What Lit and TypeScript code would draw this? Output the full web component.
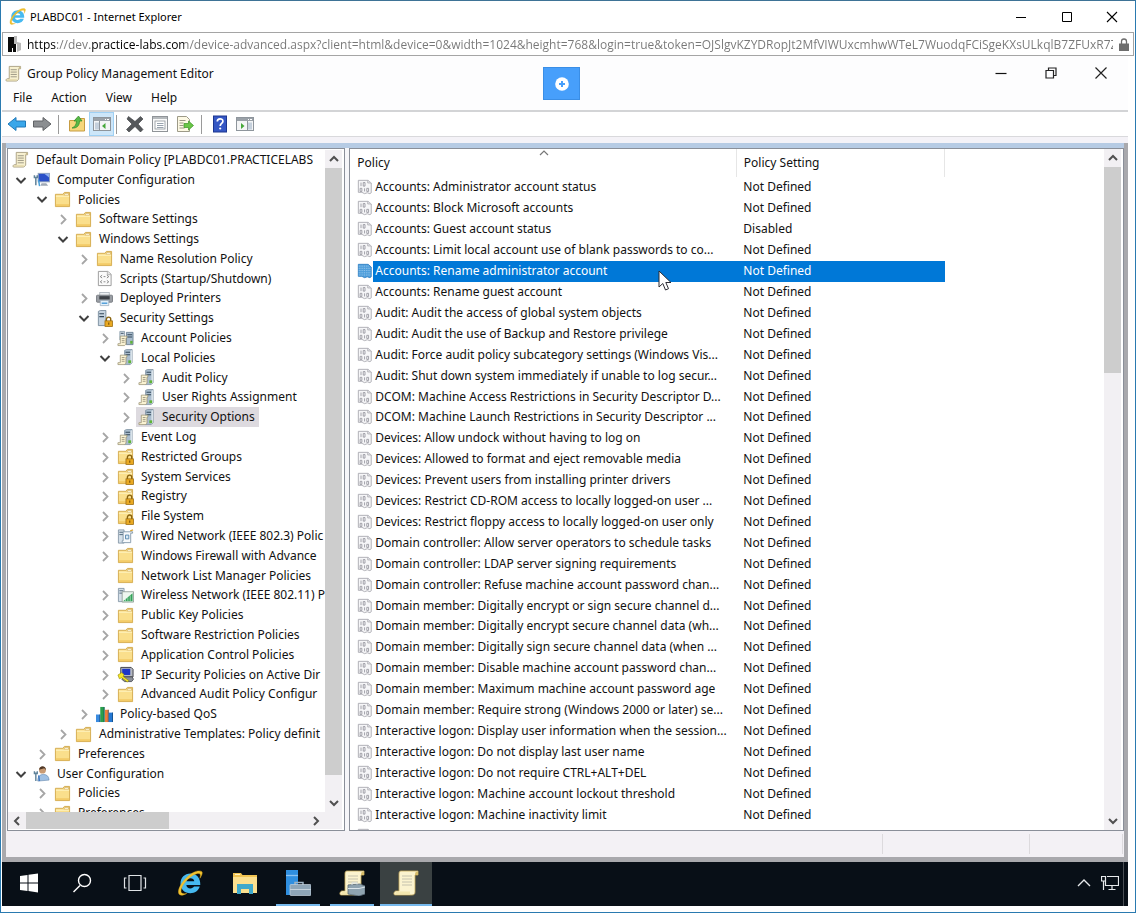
import { LitElement, html, svg, css, nothing } from "lit";
import { customElement, property } from "lit/decorators.js";

const frame = (body: unknown, box = "0 0 18 18") =>
  html`<svg class="ico" viewBox=${box} aria-hidden="true">${body}</svg>`;

const folderShape = svg`
  <path d="M1.500 3.500h8l1.500-2h5.500v15h-15z" fill="#fadf8c" stroke="#d3aa4e"/>
  <path d="M10.500 4.500l1-2h4v2z" fill="#fffbe6" stroke="#c89b3d" stroke-width=".6"/>
  <path d="M2 5.500h14" stroke="#fff4c8"/>
  <path d="M2 14h14v2H2z" fill="#f3cb68"/>`;
const lockShape = svg`
  <path d="M11 12v-2.200a2.300 2.300 0 0 1 4.600 0V12" fill="none" stroke="#8a6410" stroke-width="1.500"/>
  <rect x="9.500" y="11.500" width="8" height="6" fill="#e9a922" stroke="#9a6b10" stroke-width=".8"/>
  <path d="M13.500 13.300v2.200" stroke="#7a5208" stroke-width="1.200"/>`;
const scrollShape = svg`
  <path d="M4.500 1.500h12v2.500h-2v11l-2 2h-11c-1-1 0-2.500 1-2.500h2z" fill="#f7f0cf" stroke="#a3987a" stroke-width=".9"/>
  <path d="M14.500 4h2V2l-1.500-.5z" fill="#cbbd8e"/>
  <path d="M6 5h6.500M6 7.500h6.500M6 10h6.500M6 12.500h6.500" stroke="#8f8a7b" stroke-width=".9"/>
  <path d="M3 15h9.500v1.500h-11z" fill="#e3d7a8"/>`;
const towerShape = svg`
  <path d="M8 1.500l2-1h6v14l-2 2H8z" fill="#a9bccd" stroke="#718697" stroke-width=".7"/>
  <path d="M9 3.500h5M9 6h5" stroke="#33475a" stroke-width="1.100"/>
  <path d="M14.300 2v14l1.500-2V1z" fill="#dfe8ee"/>
  <rect x="12" y="12" width="3" height="3" fill="#5fb336"/>`;
const noteShape = svg`
  <path d="M3.500 6.500h7v2h-1v6.500l-1.500 1.500H1v-2h2.500z" fill="#faf3d3" stroke="#9b9272" stroke-width=".8"/>
  <path d="M5 9h3M5 11h3M5 13h3" stroke="#8a846f" stroke-width=".8"/>`;

const glyphs: Record<string, unknown> = {
  scroll: frame(scrollShape),
  folder: frame(folderShape),
  folderLock: frame(svg`${folderShape}${lockShape}`),
  policy: frame(svg`${towerShape}${noteShape}`),
  account: frame(svg`
    <path d="M3 1.500h5v9H3z" fill="#cfdbe4" stroke="#718697" stroke-width=".7"/>
    <path d="M4 3.500h3" stroke="#33475a"/>
    <path d="M10 2.500h7v13h-7z" fill="#a9bccd" stroke="#5d7486" stroke-width=".8"/>
    <path d="M11 5h5M11 7.500h5" stroke="#33475a" stroke-width="1.100"/>
    <rect x="14" y="11.500" width="2.500" height="3" fill="#5fb336"/>${noteShape}`),
  computer: frame(svg`
    <rect x="5.500" y="2.500" width="12" height="9" fill="#2a50c8" stroke="#93a4bb"/>
    <path d="M12 3h5v4z" fill="#8fb0f0"/>
    <path d="M9 13h5l2 2.500H8z" fill="#9fa9b5"/>
    <path d="M3 6v9M1.500 4.500v2.500h3V4.500" stroke="#5f8299" stroke-width="1.600" fill="none"/>
    <path d="M5.800 9l1.200 7" stroke="#49a0d8" stroke-width="1.600"/>`),
  user: frame(svg`
    <path d="M5 17c0-5 2.500-7 6-7s6 2 6 6z" fill="#9fc0e4" stroke="#5b7fa8" stroke-width=".6"/>
    <circle cx="10" cy="5.500" r="3.600" fill="#c99b74"/>
    <path d="M6.500 5c0-5 7.500-5 7.200.5L12 3.500z" fill="#4f3826"/>
    <path d="M3 8v9M1.500 6.500v2.500h3V6.500" stroke="#5f8299" stroke-width="1.500" fill="none"/>
    <path d="M6 11l.8 6" stroke="#3f78c0" stroke-width="1.500"/>`),
  script: frame(svg`
    <path d="M2.500 1.500h10l3.500 3v12h-13.500z" fill="#fbfbfb" stroke="#9a9a9a"/>
    <path d="M12 1.500v3.500h4" fill="#e6e6e6" stroke="#9a9a9a" stroke-width=".7"/>
    <path d="M6.500 5.500l-2 1.500 2 1.500M8 7h2M11.500 5.500l2 1.500-2 1.500M6.500 11l-2 1.500 2 1.500M8 12.500h2M11.500 11l2 1.500-2 1.500" fill="none" stroke="#777" stroke-width=".9"/>`),
  printer: frame(svg`
    <rect x="4" y="2.500" width="10" height="4" fill="#eef1f4" stroke="#9aa3ab" stroke-width=".7"/>
    <rect x="0.500" y="5.500" width="17" height="7.500" rx="1" fill="#9a9ea4" stroke="#686c72" stroke-width=".8"/>
    <rect x="3.500" y="6.500" width="11" height="3.500" fill="#3d4147"/>
    <path d="M4.500 11h9v5.500h-9z" fill="#e3f0fa" stroke="#8fa3b5" stroke-width=".7"/>
    <path d="M6 14h6" stroke="#4c9bd8" stroke-width="1.500"/>`),
  secure: frame(svg`
    <path d="M2.500 1.500l2-1h6v15l-2 1h-6z" fill="#c6d4e0" stroke="#667c8e" stroke-width=".8"/>
    <path d="M3.500 4h5M3.500 7h5" stroke="#33475a" stroke-width="1.200"/>${lockShape}`),
  wired: frame(svg`
    <path d="M1.500 2h6v14h-6z" fill="#d5e0e9" stroke="#768a9b" stroke-width=".8"/>
    <path d="M2.500 4.500h4M2.500 7h4" stroke="#4f6577"/>
    <path d="M6.500 4h10v1.500h-2v10h-9v-2h1z" fill="#f7f9fb" stroke="#7d93a6" stroke-width=".9"/>
    <path d="M9 7.500h3.500v4H9z" fill="#dbeaf5" stroke="#5a88ae"/>
    <path d="M14 3l3-1" stroke="#d9a63a" stroke-width="1.400"/>`),
  wireless: frame(svg`
    <path d="M1.500 1.500h6v14h-6z" fill="#d5e0e9" stroke="#768a9b" stroke-width=".8"/>
    <path d="M2.500 4h4M2.500 6.500h4" stroke="#4f6577"/>
    <path d="M5.500 5h12v11h-12z" fill="#eef7f0" stroke="#86948c" stroke-width=".8"/>
    <path d="M6.500 15l10-8.500v8.500z" fill="#33a159"/>
    <path d="M9 15v-3M11.500 15v-4M14 15V9" stroke="#c9ecd4" stroke-width=".7"/>`),
  ipsec: frame(svg`
    <path d="M4 1.500h11l2 2v8H4z" fill="#b5b9c0" stroke="#3d3f45"/>
    <rect x="5.500" y="3" width="8.500" height="6.500" fill="#1c36c6"/>
    <path d="M5 14l3-2.500h8l1.500 2.500-2 2.500H8z" fill="#8a8f98" stroke="#3d3f45" stroke-width=".8"/>
    <path d="M1 9.500l4-2.500 2.500 2-1 2 6 4.500-1.500 1.500-6-4.500-2.500 1z" fill="#f4e628" stroke="#8d8206" stroke-width=".6"/>`),
  qos: frame(svg`
    <path d="M0 9h4.500v8H0z" fill="#3a8be0"/><path d="M4.500 1h4.500v16H4.500z" fill="#2aa04a"/>
    <path d="M9.500 4h4v13h-4z" fill="#ef7f3a"/><path d="M13.500 7h4.500v10h-4.500z" fill="#2478d4"/>
    <path d="M3.500 9h1v8h-1zM8 1h1.200v16H8zM12.500 4h1v13h-1zM17 7h1v10h-1z" fill="#0b3a66" opacity=".6"/>`),
  item: frame(svg`
    <path d="M1.500 1.500h11l3.500 3v11l-1.500 1-3-1-3 1-3-1.500H1.500z" fill="#f6f6f8" stroke="#a9a9b0"/>
    <path d="M12 1.500v3h4" fill="#dedee2" stroke="#a9a9b0" stroke-width=".8"/>
    <path d="M4.500 4v4M9 4v4h-2V4zM5.500 10.500v3.500h-2v-3.500zM8.500 10.500V14M13 10.500v3.500h-2v-3.500z" fill="none" stroke="#8f8f98" stroke-width=".9"/>`),
  itemOn: frame(svg`
    <path d="M1.500 1.500h11l3.500 3v11l-1.500 1-3-1-3 1-3-1.500H1.500z" fill="#4f9fdc" stroke="#2f7fc4"/>
    <path d="M2 3.500h12M2 6h14M2 8.500h14M2 11h14M2 13.500h14" stroke="#a4cdee" stroke-width="1" stroke-dasharray="1 1"/>`),
};

const chevDown = html`<svg class="chev" viewBox="0 0 16 16" aria-hidden="true"><path d="M3.500 6l4.500 4.500L12.500 6" fill="none" stroke="#404040" stroke-width="2"/></svg>`;
const chevRight = html`<svg class="chev" viewBox="0 0 16 16" aria-hidden="true"><path d="M6 4l4.500 4.500L6 13" fill="none" stroke="#a6a6a6" stroke-width="1.800"/></svg>`;

const arrow = (d: string) =>
  html`<svg class="arr" viewBox="0 0 16 16" aria-hidden="true"><path d=${d} fill="none" stroke="#505050" stroke-width="2"/></svg>`;
const up = "M4 10l4-4 4 4";
const down = "M4 6l4 4 4-4";
const left = "M10 4L6 8l4 4";
const right = "M6 4l4 4-4 4";

const ieGlyph = html`<svg class="ie" viewBox="0 0 24 24" aria-hidden="true">
  <path d="M21.500 13.800H8.600c.2 2 1.700 3.200 3.800 3.200 1.500 0 2.600-.6 3.300-1.700h5.300c-1.200 3.900-4.500 6.200-8.700 6.200-5.400 0-9.100-3.800-9.100-9 0-5.200 3.800-9.200 9.200-9.200 5.500 0 9.400 4 9.100 10.500zM8.700 10.400h7.300c-.3-1.900-1.600-2.900-3.600-2.900s-3.400 1-3.700 2.900z" fill="#46b9f0"/>
  <path d="M22.700 1.300c-3.200-1.600-9.200.8-14.200 6C3.500 12.300.4 18.500 1.600 21.800c1 2.300 4.600 1.500 7.400-.2-2.700.6-4.700.3-5.200-1C3.100 17.600 5.500 13 9.800 8.800 14.200 4.500 19.200 2.300 21 3.500c.9.700.8 2.200.1 4.200 1.900-2.700 2.900-5.500 1.600-6.400z" fill="#f2c230" stroke="#e0ae1c" stroke-width=".4"/>
</svg>`;

interface Node { t: string; l: number; i: string; o?: boolean | null; on?: boolean }
const n = (l: number, i: string, t: string, o: boolean | null = false, on = false): Node => ({ l, i, t, o, on });
const nodes: Node[] = [
  n(0, "scroll", "Default Domain Policy [PLABDC01.PRACTICELABS", null),
  n(1, "computer", "Computer Configuration", true),
  n(2, "folder", "Policies", true),
  n(3, "folder", "Software Settings"),
  n(3, "folder", "Windows Settings", true),
  n(4, "folder", "Name Resolution Policy"),
  n(4, "script", "Scripts (Startup/Shutdown)", null),
  n(4, "printer", "Deployed Printers"),
  n(4, "secure", "Security Settings", true),
  n(5, "account", "Account Policies"),
  n(5, "policy", "Local Policies", true),
  n(6, "policy", "Audit Policy"),
  n(6, "policy", "User Rights Assignment"),
  n(6, "policy", "Security Options", false, true),
  n(5, "policy", "Event Log"),
  n(5, "folderLock", "Restricted Groups"),
  n(5, "folderLock", "System Services"),
  n(5, "folderLock", "Registry"),
  n(5, "folderLock", "File System"),
  n(5, "wired", "Wired Network (IEEE 802.3) Polic"),
  n(5, "folder", "Windows Firewall with Advance"),
  n(5, "folder", "Network List Manager Policies", null),
  n(5, "wireless", "Wireless Network (IEEE 802.11) P"),
  n(5, "folder", "Public Key Policies"),
  n(5, "folder", "Software Restriction Policies"),
  n(5, "folder", "Application Control Policies"),
  n(5, "ipsec", "IP Security Policies on Active Dir"),
  n(5, "folder", "Advanced Audit Policy Configur"),
  n(4, "qos", "Policy-based QoS"),
  n(3, "folder", "Administrative Templates: Policy definit"),
  n(2, "folder", "Preferences"),
  n(1, "user", "User Configuration", true),
  n(2, "folder", "Policies"),
  n(2, "folder", "Preferences"),
];

const policies = [
  "Accounts: Administrator account status",
  "Accounts: Block Microsoft accounts",
  "Accounts: Guest account status",
  "Accounts: Limit local account use of blank passwords to co...",
  "Accounts: Rename administrator account",
  "Accounts: Rename guest account",
  "Audit: Audit the access of global system objects",
  "Audit: Audit the use of Backup and Restore privilege",
  "Audit: Force audit policy subcategory settings (Windows Vis...",
  "Audit: Shut down system immediately if unable to log secur...",
  "DCOM: Machine Access Restrictions in Security Descriptor D...",
  "DCOM: Machine Launch Restrictions in Security Descriptor ...",
  "Devices: Allow undock without having to log on",
  "Devices: Allowed to format and eject removable media",
  "Devices: Prevent users from installing printer drivers",
  "Devices: Restrict CD-ROM access to locally logged-on user ...",
  "Devices: Restrict floppy access to locally logged-on user only",
  "Domain controller: Allow server operators to schedule tasks",
  "Domain controller: LDAP server signing requirements",
  "Domain controller: Refuse machine account password chan...",
  "Domain member: Digitally encrypt or sign secure channel d...",
  "Domain member: Digitally encrypt secure channel data (wh...",
  "Domain member: Digitally sign secure channel data (when ...",
  "Domain member: Disable machine account password chan...",
  "Domain member: Maximum machine account password age",
  "Domain member: Require strong (Windows 2000 or later) se...",
  "Interactive logon: Display user information when the session...",
  "Interactive logon: Do not display last user name",
  "Interactive logon: Do not require CTRL+ALT+DEL",
  "Interactive logon: Machine account lockout threshold",
  "Interactive logon: Machine inactivity limit",
];

const base = css`
  :host { box-sizing: border-box; font: 12px/16px "Noto Sans", "Open Sans", sans-serif; color: #111; }
  *, *::before { box-sizing: border-box; }
  button { font: inherit; color: inherit; background: none; border: 0; padding: 0; margin: 0; display: flex; align-items: center; justify-content: center; }
  svg { display: block; flex: none; }
`;

@customElement("scroll-bar")
class ScrollBar extends LitElement {
  @property() axis = "v";
  @property({ type: Number }) start = 0;
  @property({ type: Number }) size = 50;
  static styles = [base, css`
    :host { display: flex; flex: none; background: #f2f0f3; }
    :host([axis="v"]) { flex-direction: column; width: 17px; }
    :host([axis="h"]) { height: 17px; }
    button { width: 17px; height: 18px; flex: none; }
    :host([axis="h"]) button { width: 18px; height: 17px; }
    .arr { width: 16px; height: 16px; }
    .track { flex: 1; display: flex; }
    :host([axis="v"]) .track { flex-direction: column; }
    .thumb { background: #cdcdcd; }
  `];
  render() {
    const v = this.axis === "v";
    return html`
      <button aria-label=${v ? "Scroll up" : "Scroll left"}>${arrow(v ? up : left)}</button>
      <div class="track">
        <div style="flex:${this.start}"></div>
        <div class="thumb" style="flex:${this.size}"></div>
        <div style="flex:${100 - this.start - this.size}"></div>
      </div>
      <button aria-label=${v ? "Scroll down" : "Scroll right"}>${arrow(v ? down : right)}</button>`;
  }
}

@customElement("browser-head")
class BrowserHead extends LitElement {
  static styles = [base, css`
    :host { display: block; flex: none; }
    .title { display: flex; align-items: center; height: 31px; padding-left: 7px; color: #000; font-size: 11px; }
    .ie { width: 17px; height: 17px; margin-right: 4px; }
    .grow { flex: 1; }
    .title button { width: 46px; height: 30px; }
    .title button:last-child { width: 44px; }
    .title svg.w { width: 12px; height: 12px; }
    .addr { display: flex; align-items: center; height: 24px; border: 1px solid #a5a5a5; padding: 0 4px 0 5px; }
    .fav { width: 14px; height: 16px; margin-right: 5px; }
    input { flex: 1; min-width: 0; font: 12px/16px "Open Sans", "Noto Sans", sans-serif; border: 0; padding: 0; margin: 0 6px 0 0; outline: 0; height: 20px; color: #777;
      background: linear-gradient(90deg, #000 29px, #777 29px 63px, #000 63px 157px, #777 157px); -webkit-background-clip: text; background-clip: text; -webkit-text-fill-color: transparent; }
    .lock { width: 10px; height: 13px; }
  `];
  render() {
    return html`
      <div class="title">
        ${ieGlyph}<span>PLABDC01 - Internet Explorer</span><span class="grow"></span>
        <button aria-label="Minimize"><svg class="w" viewBox="0 0 12 12"><path d="M1 6.500h10" stroke="#000"/></svg></button>
        <button aria-label="Maximize"><svg class="w" viewBox="0 0 12 12"><path d="M1.500 1.500h9v9h-9z" fill="none" stroke="#000"/></svg></button>
        <button aria-label="Close"><svg class="w" viewBox="0 0 12 12"><path d="M1 1l10 10M11 1L1 11" stroke="#000" stroke-width="1.100"/></svg></button>
      </div>
      <div class="addr">
        <svg class="fav" viewBox="0 0 14 16" aria-hidden="true"><path d="M0 1h6v7h2v8H5v-4H4v4H0z" fill="#0b0b0b"/><path d="M6 0h3v6l4 1v7l-4 2V8H6z" fill="#b9b9b9"/></svg>
        <input aria-label="Address" value="https://dev.practice-labs.com/device-advanced.aspx?client=html&device=0&width=1024&height=768&login=true&token=OJSlgvKZYDRopJt2MfVIWUxcmhwWTeL7WuodqFCiSgeKXsULkqlB7ZFUxR7ZYOgV">
        <svg class="lock" viewBox="0 0 10 13" aria-hidden="true"><path d="M2.500 6V3.500a2.500 2.500 0 0 1 5 0V6" fill="none" stroke="#6d6d6d" stroke-width="1.300"/><path d="M0 5.500h10V13H0z" fill="#6d6d6d"/></svg>
      </div>`;
  }
}

@customElement("policy-tree")
class PolicyTree extends LitElement {
  static styles = [base, css`
    :host { display: flex; flex-direction: column; min-width: 0; min-height: 0; background: #fff; border: 1px solid #8a8f99; padding: 1px 2px 1px 0; }
    .top { flex: 1; display: flex; min-height: 0; }
    .clip { flex: 1; min-width: 0; overflow: hidden; }
    ul { list-style: none; margin: 0; padding: 0; height: calc(100% + 11px); display: flex; flex-direction: column; }
    li { flex: 1 1 0; min-height: 0; display: flex; align-items: center; white-space: nowrap; }
    .chev { width: 16px; height: 16px; margin-right: 2px; }
    .item { display: flex; align-items: center; height: 20px; padding: 0 4px 0 2px; gap: 7px; }
    .on { background: #dddadf; }
    .ico { width: 17px; height: 17px; }
    .foot { display: flex; padding-right: 17px; background: #f2f0f3; }
    .foot scroll-bar { flex: 1; }
  `];
  render() {
    return html`
      <div class="top">
        <div class="clip"><ul role="tree">
          ${nodes.map((d) => html`<li role="treeitem" style="padding-left:${d.o === null ? 2 + 21 * d.l : 4 + 21 * (d.l - 1) + 1}px">
            ${d.o === null ? nothing : d.o ? chevDown : chevRight}
            <div class="item ${d.on ? "on" : ""}">${glyphs[d.i]}<span>${d.t}</span></div>
          </li>`)}
        </ul></div>
        <scroll-bar axis="v" start="0" size="97"></scroll-bar>
      </div>
      <div class="foot"><scroll-bar axis="h" start="0" size="51"></scroll-bar></div>`;
  }
}

@customElement("policy-list")
class PolicyList extends LitElement {
  static styles = [base, css`
    :host { display: flex; min-width: 0; min-height: 0; background: #fff; border: 1px solid #8a8f99; padding-right: 2px; }
    .clip { flex: 1; min-width: 0; overflow: hidden; position: relative; }
    .caret { position: absolute; left: 186px; top: 0; width: 16px; height: 8px; }
    table { border-collapse: collapse; height: calc(100% + 16px); width: 595px; table-layout: fixed; }
    th, td { padding: 0; text-align: left; font-weight: 400; white-space: nowrap; overflow: hidden; }
    th { height: 28px; padding-left: 7px; border-right: 1px solid #e6e6e6; }
    th.first { width: 386px; }
    td + td { padding-left: 7px; }
    .cell { display: flex; align-items: center; padding-left: 7px; gap: 2px; }
    .ico { width: 16px; height: 16px; }
    .sel td { background: #0078d7; color: #fff; }
    .sel td:first-child { background: linear-gradient(90deg, #fff 23px, #0078d7 23px); }
  `];
  render() {
    return html`
      <div class="clip">
        <svg class="caret" viewBox="0 0 16 8" aria-hidden="true"><path d="M4 6l4-4 4 4" fill="none" stroke="#777" stroke-width="1.200"/></svg>
        <table>
          <thead><tr><th class="first">Policy</th><th>Policy Setting</th></tr></thead>
          <tbody>
            ${policies.map((p, i) => html`<tr class=${i === 4 ? "sel" : ""}>
              <td><div class="cell">${glyphs[i === 4 ? "itemOn" : "item"]}<span>${p}</span></div></td>
              <td>${i === 2 ? "Disabled" : "Not Defined"}</td></tr>`)}
            <tr><td><div class="cell">${glyphs.item}</div></td><td></td></tr>
          </tbody>
        </table>
      </div>
      <scroll-bar axis="v" start="0" size="32"></scroll-bar>`;
  }
}

@customElement("task-bar")
class TaskBar extends LitElement {
  static styles = [base, css`
    :host { display: flex; flex: none; height: 44px; background: #080f17; }
    button { width: 54px; height: 44px; border-bottom: 2px solid transparent; }
    button:first-child, button:nth-child(2) { width: 53px; }
    button:nth-child(4) { width: 56px; }
    button:nth-child(5) { width: 53px; }
    .run { width: 44px; margin: 0 5px; border-bottom-color: #76b9ed; }
    .cur { width: 52px; margin: 0 0 0 1px; background: #3a4142; border-bottom-color: #76b9ed; }
    .grow { flex: 1; }
    .s, .ie { width: 26px; height: 26px; }
    .tray { width: 26px; }
    .tray svg { width: 18px; height: 18px; }
    .peek { width: 5px; border-left: 1px solid #4a4f55; }
  `];
  render() {
    const paper = svg`<path d="M8 1h17v4h-3v17c0 2-1 3-3 3H2c-2 0-1-4 1-4h3V4c0-2 .500-3 2-3z" fill="#fbf3cf" stroke="#c9ab5a" stroke-width=".8"/><path d="M22 5h3V2c-2-1-3 0-3 3z" fill="#d8bd6a"/><path d="M9 6h10M9 9h10M9 12h10M9 15h10" stroke="#b9b5a6" stroke-width=".8"/><path d="M3 21.500h14v3H2z" fill="#f3e6ae"/>`;
    return html`
      <button aria-label="Start"><svg class="s" viewBox="0 0 26 26"><path d="M4 6l7.500-1v7.500H4zM12.500 4.800L22 3.600v8.900h-9.500zM4 13.500h7.500V21L4 20zM12.500 13.500H22v8.900l-9.500-1.300z" fill="#fff"/></svg></button>
      <button aria-label="Search"><svg class="s" viewBox="0 0 26 26"><path d="M11 15.500L4.500 22" stroke="#fff" stroke-width="1.500"/><circle cx="15.500" cy="10.500" r="6" fill="none" stroke="#fff" stroke-width="1.400"/></svg></button>
      <button aria-label="Task View"><svg class="s" viewBox="0 0 26 26"><path d="M7 5.500h12v15H7zM4.500 8H2.500v10h2M21.500 8h2v10h-2" fill="none" stroke="#dfe3e6" stroke-width="1.200"/></svg></button>
      <button aria-label="Internet Explorer">${ieGlyph}</button>
      <button aria-label="File Explorer"><svg class="s" viewBox="0 0 26 26"><path d="M1 3h8l1.500 2H25v18H1z" fill="#f0c352"/><path d="M1 7h24v16H1z" fill="#fbe08f"/><path d="M3 4.500h5" stroke="#fff2c0"/><path d="M5 14h16v10h-4v-5H9v5H5z" fill="#3fa9cc"/></svg></button>
      <button class="run" aria-label="Server Manager"><svg class="s" viewBox="0 0 26 26"><path d="M1 0h12v25H1z" fill="#2f8fe0"/><path d="M1 5.500h12" stroke="#8cc4f2" stroke-width="1.300"/><path d="M10 15V12.500h8V15" fill="none" stroke="#9fb3c4" stroke-width="1.500"/><rect x="5" y="14.500" width="21" height="11" rx="1" fill="#8fa6b8" stroke="#c6d3dd" stroke-width=".7"/><path d="M5 19.500h21" stroke="#c6d3dd"/></svg></button>
      <button class="run" aria-label="Group Policy Management"><svg class="s" viewBox="0 0 26 26">${paper}<path d="M9 15l12-1 5 2v8l-6 2-11-2z" fill="#8fa3b0" stroke="#5b6b77" stroke-width=".8"/><path d="M9 18.500h11l6-1.500M13 15v-2h5v1.500" stroke="#dbe4ea" fill="none"/></svg></button>
      <button class="cur" aria-label="Group Policy Management Editor"><svg class="s" viewBox="0 0 26 26">${paper}</svg></button>
      <span class="grow"></span>
      <button class="tray" aria-label="Show hidden icons"><svg viewBox="0 0 18 18"><path d="M3 12l6-6 6 6" fill="none" stroke="#e6e9eb" stroke-width="1.400"/></svg></button>
      <button class="tray" aria-label="Network"><svg viewBox="0 0 18 18"><path d="M6 2.500h11.500v9H4.500V7M11 11.500V15M7.500 15.500h7M.500 2.500h4V7h-4zM2.500 7v9" fill="none" stroke="#e6e9eb" stroke-width="1.200"/></svg></button>
      <span class="peek"></span>`;
  }
}

const win = svg`<rect x=".500" y="2.500" width="17" height="13" fill="#f4f5f6" stroke="#8e959c"/><path d="M1 3h16v3H1z" fill="#9aa1a8"/><path d="M12 4.500h1M14 4.500h2" stroke="#fff"/>`;

@customElement("app-root")
class AppRoot extends LitElement {
  static styles = [base, css`
    :host { display: flex; flex-direction: column; height: 100vh; background: #fff; border: 1px solid #2a7ab0; border-top-color: #3e7396; padding: 0 1px 6px 1px; overflow: hidden; }
    .desk { flex: 1; min-height: 0; display: flex; flex-direction: column; margin-right: 6px; position: relative; background: #f4f2f7; }
    .cap { display: flex; align-items: center; height: 32px; padding: 2px 2px 0 3px; background: #fdfdfe; flex: none; }
    .cap .ico { width: 17px; height: 17px; margin-right: 5px; }
    .cap > span { padding-top: 2px; }
    .grow { flex: 1; }
    .cap button { width: 50px; height: 28px; }
    .cap button svg { width: 12px; height: 12px; }
    .plus { position: absolute; left: 541px; top: 11px; width: 37px; height: 33px; background: #479ffb; border: 1px solid #3a8ee6; }
    .plus svg { width: 14px; height: 14px; }
    nav { display: flex; height: 24px; padding-left: 3px; gap: 4px; background: #fdfdfe; border-bottom: 2px solid #d3d4d6; flex: none; }
    nav button { padding: 0 7px 2px 8px; height: 22px; }
    .tools { display: flex; align-items: center; height: 25px; padding-left: 2px; background: #fff; border-bottom: 1px solid #d9d9dc; flex: none; }
    .tools button { width: 25px; height: 24px; }
    .tools svg { width: 18px; height: 18px; }
    .tools .hot { background: #cde6f9; border: 1px solid #9fd0f4; }
    .sep { width: 1px; height: 19px; background: #9a9a9a; margin: 0 5px 0 4px; }
    .sep.b { margin: 0 5px 0 2px; }
    .main { flex: 1; min-height: 0; display: flex; flex-direction: column; border: solid #a9a9ad; border-width: 0 4px 5px 4px; background: #f3f1f5; margin-top: 6px; }
    .panes { flex: 1; min-height: 0; display: grid; grid-template-columns: 38fr 87fr; column-gap: 4px; border-top: 5px solid #b6cbe4; padding-left: 1px; background: #f6f6f9; }
    .status { display: flex; justify-content: flex-end; height: 26px; flex: none; padding: 3px 1px; }
    .status i { width: 147px; border-left: 1px solid #dcdadd; }
    .status i:last-child { width: 94px; border-right: 1px solid #dcdadd; }
    .cursor { position: absolute; left: 656px; top: 214px; width: 14px; height: 22px; }
  `];
  render() {
    return html`
      <browser-head></browser-head>
      <div class="desk">
        <div class="cap">${glyphs.scroll}<span>Group Policy Management Editor</span><span class="grow"></span>
          <button aria-label="Minimize"><svg viewBox="0 0 12 12"><path d="M.500 6.500h11" stroke="#111" stroke-width="1.200"/></svg></button>
          <button aria-label="Restore"><svg viewBox="0 0 12 12"><path d="M1 3.500h7.500v7.500H1zM3.500 3.500V1h7.500v7.500H8.500" fill="none" stroke="#222" stroke-width="1.200"/></svg></button>
          <button aria-label="Close"><svg viewBox="0 0 12 12"><path d="M.500.500l11 11M11.500.500l-11 11" stroke="#222" stroke-width="1.200"/></svg></button>
        </div>
        <nav><button>File</button><button>Action</button><button>View</button><button>Help</button></nav>
        <div class="tools">
          <button aria-label="Back"><svg viewBox="0 0 18 18"><path d="M0 9l8-6.500v3.500h9.500v6H8V15.500z" fill="#3aa7ea" stroke="#2079b8"/></svg></button>
          <button aria-label="Forward"><svg viewBox="0 0 18 18"><path d="M18 9l-8-6.500v3.500H.500v6H10V15.500z" fill="#8b8e91" stroke="#606366"/></svg></button>
          <span class="sep"></span>
          <button aria-label="Up one level"><svg viewBox="0 0 18 18"><path d="M1.500 5.500h6l1-2h8v12.500h-15z" fill="#f6d77c" stroke="#c79c42"/><path d="M4 13c3-1 4.500-4 4.500-7H6l4.500-5L14 6h-2.500c0 5-3 7.500-7.500 7z" fill="#58b947" stroke="#2f8a27" stroke-width=".7"/></svg></button>
          <button class="hot" aria-label="Show console tree"><svg viewBox="0 0 18 18">${win}<path d="M2 7.500h4v7H2z" fill="#c5d0dc"/><path d="M6.500 6v9.500" stroke="#8e959c"/><path d="M12.500 8v6L9 11z" fill="#46a83a"/></svg></button>
          <span class="sep b"></span>
          <button aria-label="Delete"><svg viewBox="0 0 18 18"><path d="M2.500 1.500L9 6.500l5.500-5 2.500 2.500-5 5 5 5.500-2.500 2.500L9 11.500l-6 5.500-2.500-2.500L6 9 1 4z" fill="#55585b" stroke="#36383a" stroke-width=".6"/></svg></button>
          <button aria-label="Properties"><svg viewBox="0 0 18 18"><rect x="1.500" y="1.500" width="15" height="15" fill="#fafafa" stroke="#909498"/><path d="M2 3h14" stroke="#b6babd" stroke-width="2"/><rect x="4" y="6" width="10" height="8" fill="#fff" stroke="#8d9499" stroke-width=".8"/><path d="M6 8.500h6.500M6 10.500h6.500M6 12.500h6.500" stroke="#7d8b99" stroke-width=".8"/></svg></button>
          <button aria-label="Export list"><svg viewBox="0 0 18 18"><path d="M1.500 1.500h9l3 3v12h-12z" fill="#fdf9e4" stroke="#9d9a88"/><path d="M3.500 5.500h6M3.500 8h4M3.500 10.500h4M3.500 13h5" stroke="#8d8a79" stroke-width=".9"/><path d="M8 8.500h4.500V6l5 4.500-5 4.500v-2.500H8z" fill="#69c646" stroke="#3a9426" stroke-width=".7"/></svg></button>
          <span class="sep"></span>
          <button aria-label="Help"><svg viewBox="0 0 18 18"><rect x="2.500" y="1" width="13" height="16" fill="#3557c4" stroke="#1c3690"/><path d="M6.300 6.500c0-3.500 5.600-3.500 5.600-.2 0 2.200-2.700 2.200-2.700 4.700" fill="none" stroke="#fff" stroke-width="1.700"/><circle cx="9.200" cy="13.500" r="1.100" fill="#fff"/></svg></button>
          <button aria-label="Show action pane"><svg viewBox="0 0 18 18">${win}<path d="M12 7.500h4v7h-4z" fill="#c5d0dc"/><path d="M11.500 6v9.500" stroke="#8e959c"/><path d="M5 8v6l3.500-3z" fill="#46a83a"/></svg></button>
        </div>
        <div class="main">
          <div class="panes"><policy-tree></policy-tree><policy-list></policy-list></div>
          <div class="status"><i></i><i></i></div>
        </div>
        <task-bar></task-bar>
        <button class="plus" aria-label="Open toolbar"><svg viewBox="0 0 14 14"><circle cx="7" cy="7" r="6.800" fill="#fff"/><path d="M7 4v6M4 7h6" stroke="#479ffb" stroke-width="2"/></svg></button>
        <svg class="cursor" viewBox="0 0 14 22" aria-hidden="true"><path d="M1 1v16l3.800-3.500L7.500 20l3-1.300L7.800 12.500H13z" fill="#fff" stroke="#2b2b33"/></svg>
      </div>`;
  }
}
